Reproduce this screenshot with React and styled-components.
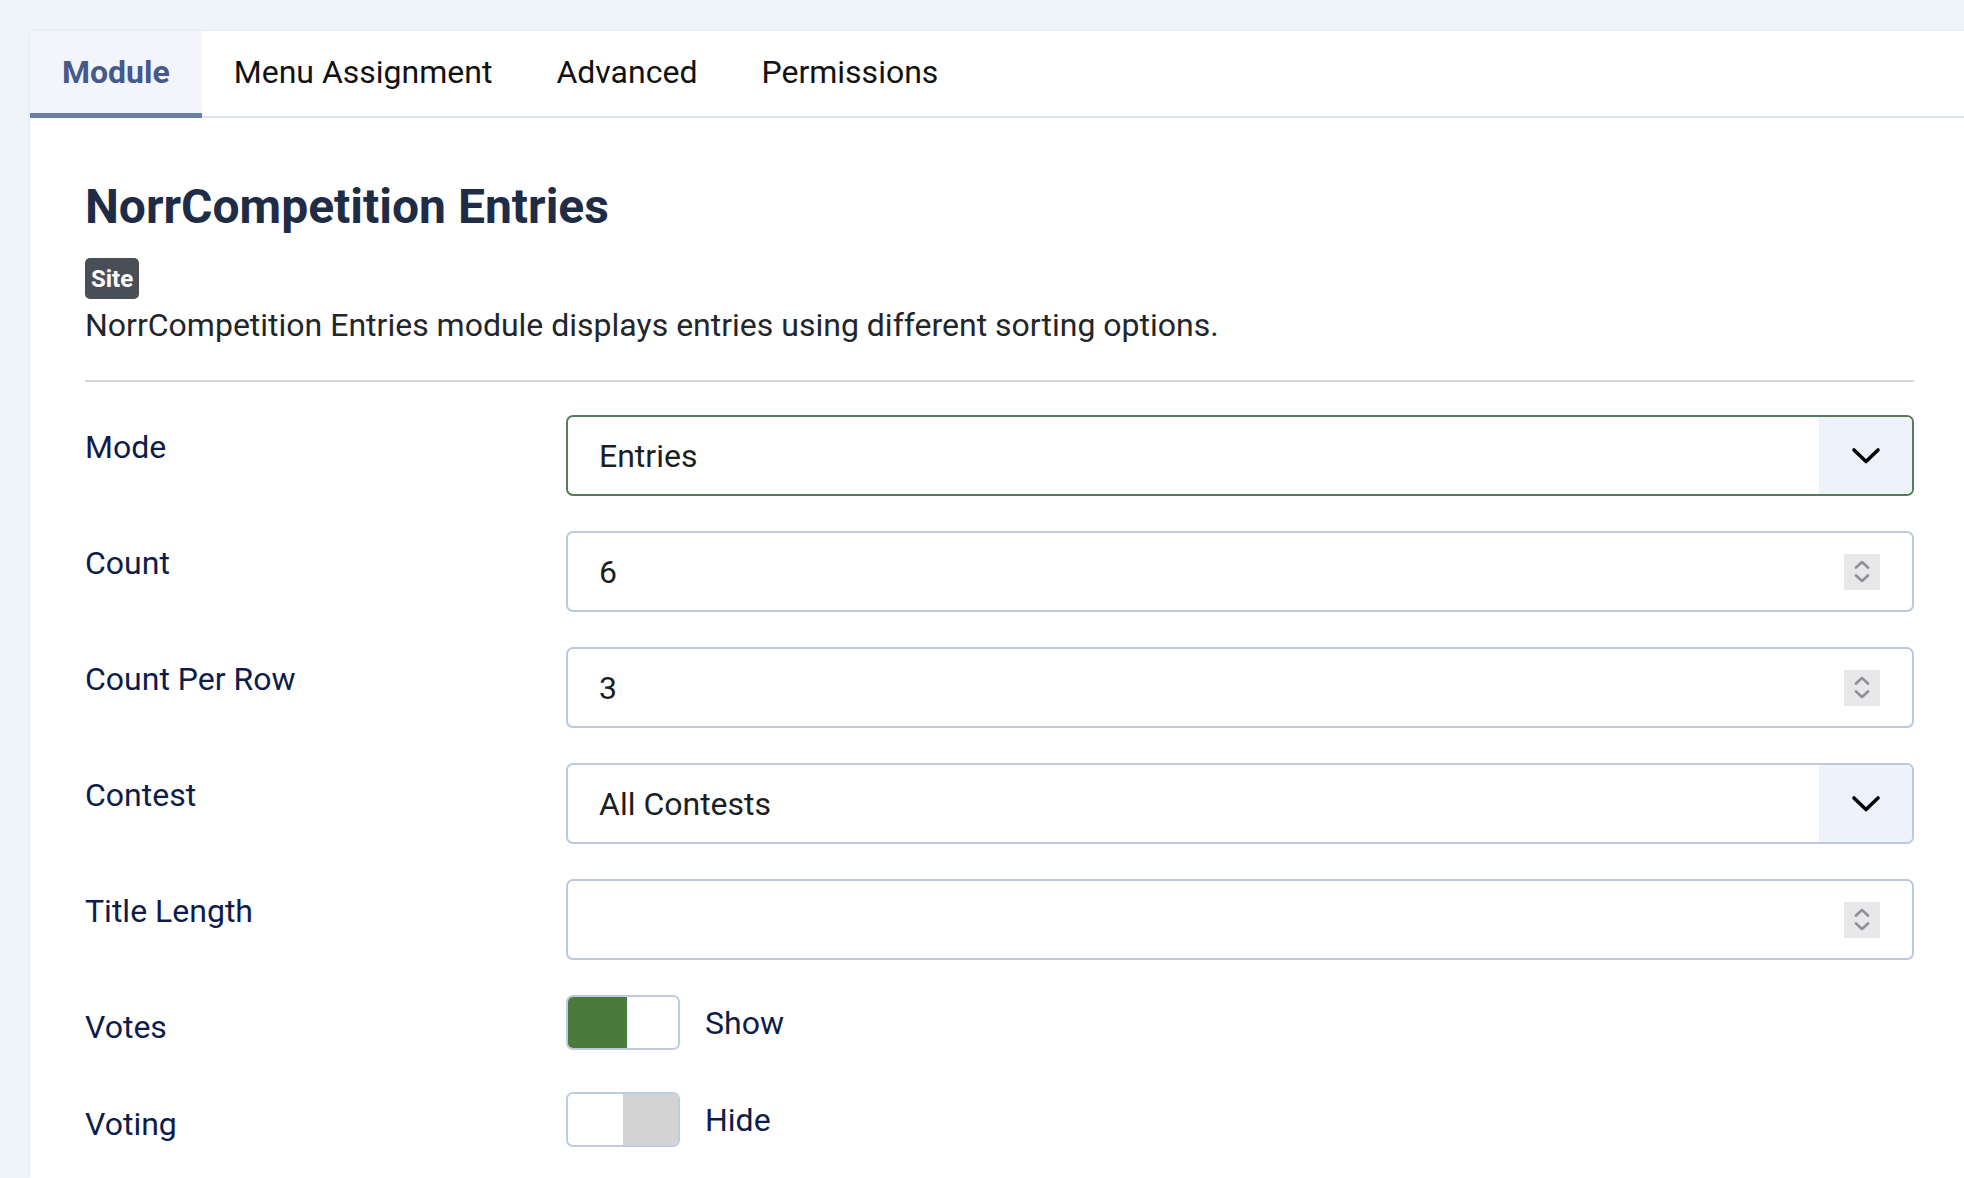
import React from "react";
import styled, { createGlobalStyle } from "styled-components";

const GlobalStyle = createGlobalStyle`
  html, body { margin: 0; padding: 0; }
  body {
    background: #eff3fa;
    font-family: Roboto, "Noto Sans", "Liberation Sans", sans-serif;
    overflow: hidden;
  }
`;

const Page = styled.div`
  padding: 31px 0 0 30px;
  min-height: 1178px;
  box-sizing: border-box;
`;

const Card = styled.div`
  background: #fff;
  border-top-left-radius: 6px;
  min-height: 1147px;
  box-shadow: 0 0 4px rgba(30, 50, 90, 0.06);
`;

const TabBar = styled.nav`
  display: flex;
  height: 87px;
  border-bottom: 2px solid #dde3ef;
  box-sizing: border-box;
`;

const Tab = styled.div`
  display: flex;
  align-items: center;
  padding: 0 32px;
  font-size: 32px;
  color: ${(p) => (p.$active ? "#45598a" : "#111")};
  font-weight: ${(p) => (p.$active ? 700 : 400)};
  background: ${(p) => (p.$active ? "#f3f5fa" : "transparent")};
  border-bottom: 5px solid ${(p) => (p.$active ? "#6a7fa4" : "transparent")};
  margin-bottom: -2px;
  border-top-left-radius: ${(p) => (p.$active ? "6px" : "0")};
`;

const Body = styled.div`
  padding: 58px 50px 0 55px;
`;

const Title = styled.h2`
  margin: 0;
  font-size: 48px;
  line-height: 62px;
  font-weight: 700;
  color: #1f2c45;
`;

const Badge = styled.span`
  display: inline-flex;
  align-items: center;
  justify-content: center;
  margin-top: 20px;
  width: 54px;
  height: 41px;
  border-radius: 5px;
  background: #4a4e56;
  color: #fff;
  font-weight: 700;
  font-size: 24px;
`;

const Description = styled.p`
  margin: 6px 0 0;
  font-size: 32px;
  line-height: 40px;
  color: #22262b;
`;

const Divider = styled.hr`
  margin: 35px 0 33px;
  border: 0;
  border-top: 2px solid #d2d5da;
`;

const Row = styled.div`
  display: grid;
  grid-template-columns: 481px 1fr;
  align-items: ${(p) => (p.$center ? "center" : "start")};
  margin-bottom: ${(p) => p.$gap || 35}px;
`;

const Label = styled.label`
  font-size: 32px;
  line-height: 40px;
  color: #0e1c4b;
  padding-top: ${(p) => (p.$center ? 8 : 12)}px;
`;

const Field = styled.div`
  display: flex;
  align-items: center;
  height: 81px;
  box-sizing: border-box;
  border: 2px solid ${(p) => (p.$focus ? "#557d55" : "#bcc8dd")};
  border-radius: 7px;
  overflow: hidden;
  background: #fff;
`;

const Value = styled.span`
  flex: 1;
  padding-left: 31px;
  font-size: 32px;
  color: #1b1e22;
`;

const Caret = styled.span`
  display: flex;
  align-items: center;
  justify-content: center;
  align-self: stretch;
  width: 93px;
  background: #eef2fa;
`;

const Spinner = styled.span`
  display: flex;
  flex-direction: column;
  align-items: center;
  justify-content: center;
  gap: 5px;
  width: 36px;
  height: 36px;
  margin-right: 32px;
  background: #e8e8eb;
`;

const SwitchLine = styled.div`
  display: flex;
  align-items: center;
  gap: 25px;
`;

const Switch = styled.div`
  display: flex;
  width: 114px;
  height: 55px;
  box-sizing: border-box;
  border: 2px solid #bfcbe0;
  border-radius: 7px;
  overflow: hidden;
`;

const SwitchHalf = styled.span`
  width: ${(p) => p.$width}%;
  background: ${(p) => p.$color};
`;

const SwitchText = styled.span`
  font-size: 32px;
  color: #0e1c4b;
`;

const ChevronDown = () => (
  <svg width="30" height="18" viewBox="0 0 30 18" fill="none">
    <path d="M3 3 L15 14.5 L27 3" stroke="#000" strokeWidth="3.6" strokeLinecap="round" strokeLinejoin="round" />
  </svg>
);

const SpinArrows = () => (
  <>
    <svg width="16" height="9" viewBox="0 0 16 9" fill="none">
      <path d="M2 7.5 L8 2 L14 7.5" stroke="#8f8f98" strokeWidth="2.6" strokeLinecap="round" strokeLinejoin="round" />
    </svg>
    <svg width="16" height="9" viewBox="0 0 16 9" fill="none">
      <path d="M2 1.5 L8 7 L14 1.5" stroke="#8f8f98" strokeWidth="2.6" strokeLinecap="round" strokeLinejoin="round" />
    </svg>
  </>
);

const SelectField = ({ value, focus }) => (
  <Field $focus={focus}>
    <Value>{value}</Value>
    <Caret>
      <ChevronDown />
    </Caret>
  </Field>
);

const NumberField = ({ value }) => (
  <Field>
    <Value>{value}</Value>
    <Spinner>
      <SpinArrows />
    </Spinner>
  </Field>
);

const Toggle = ({ on }) => (
  <SwitchLine>
    <Switch>
      {on ? (
        <>
          <SwitchHalf $width={54} $color="#4a7a3d" />
          <SwitchHalf $width={46} $color="#fff" />
        </>
      ) : (
        <>
          <SwitchHalf $width={50} $color="#fff" />
          <SwitchHalf $width={50} $color="#d3d3d3" />
        </>
      )}
    </Switch>
    <SwitchText>{on ? "Show" : "Hide"}</SwitchText>
  </SwitchLine>
);

export default function App() {
  return (
    <>
      <GlobalStyle />
      <Page>
        <Card>
          <TabBar>
            <Tab $active>Module</Tab>
            <Tab>Menu Assignment</Tab>
            <Tab>Advanced</Tab>
            <Tab>Permissions</Tab>
          </TabBar>
          <Body>
            <Title>NorrCompetition Entries</Title>
            <Badge>Site</Badge>
            <Description>
              NorrCompetition Entries module displays entries using different sorting options.
            </Description>
            <Divider />
            <Row>
              <Label>Mode</Label>
              <SelectField value="Entries" focus />
            </Row>
            <Row>
              <Label>Count</Label>
              <NumberField value="6" />
            </Row>
            <Row>
              <Label>Count Per Row</Label>
              <NumberField value="3" />
            </Row>
            <Row>
              <Label>Contest</Label>
              <SelectField value="All Contests" />
            </Row>
            <Row>
              <Label>Title Length</Label>
              <NumberField value="" />
            </Row>
            <Row $center $gap={42}>
              <Label $center>Votes</Label>
              <Toggle on />
            </Row>
            <Row $center>
              <Label $center>Voting</Label>
              <Toggle />
            </Row>
          </Body>
        </Card>
      </Page>
    </>
  );
}
